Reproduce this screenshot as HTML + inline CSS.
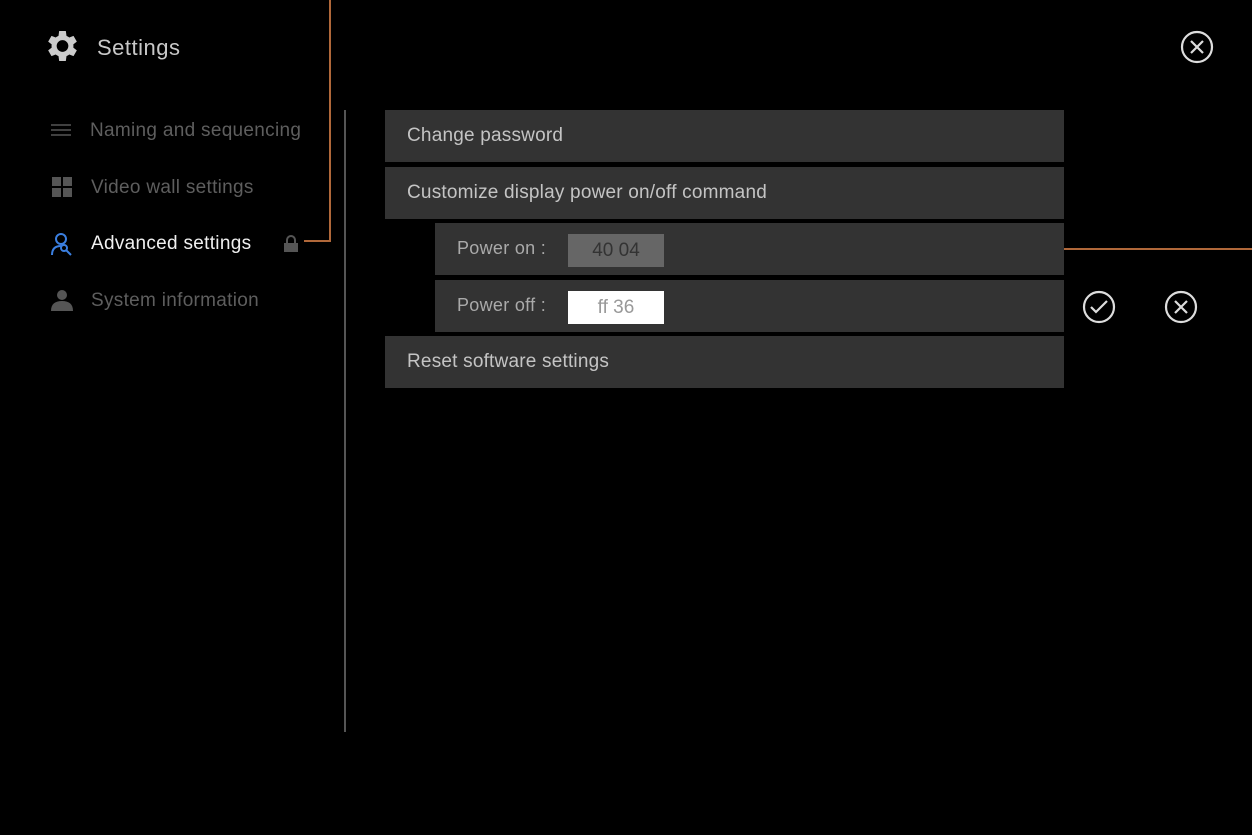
<!DOCTYPE html>
<html><head><meta charset="utf-8"><style>
*{margin:0;padding:0;box-sizing:border-box}
body{width:1252px;height:835px;background:#000;position:relative;overflow:hidden;font-family:"Liberation Sans",sans-serif}
.a{position:absolute}
.t{color:#c8c8c8;font-size:22px}
.nav{font-size:19px;color:#5e5e5e;letter-spacing:0.3px}
.bar{background:#333;color:#c4c4c4;font-size:19px;padding-left:22px;line-height:52px;height:52px;letter-spacing:0.2px}
.sub{background:#333;height:52px;left:435px;width:629px}
.lbl{color:#aaa;font-size:18px;left:22px;top:15px;letter-spacing:0.3px}
.inp{left:133px;top:11px;width:96px;height:33px;font-size:19px;text-align:center;line-height:33px}
</style></head><body>
<svg class="a" style="left:41px;top:26px" width="40" height="40" viewBox="0 0 24 24"><path fill="#ccc" d="M19.4 13a7.5 7.5 0 0 0 0-2l2.1-1.6-2-3.5-2.5 1a7 7 0 0 0-1.7-1L14.9 3h-4l-.4 2.9a7 7 0 0 0-1.7 1l-2.5-1-2 3.5L6.4 11a7.5 7.5 0 0 0 0 2l-2.1 1.6 2 3.5 2.5-1a7 7 0 0 0 1.7 1l.4 2.9h4l.4-2.9a7 7 0 0 0 1.7-1l2.5 1 2-3.5zM12.9 15.5a3.5 3.5 0 1 1 0-7 3.5 3.5 0 0 1 0 7z"/></svg>
<div class="a t" style="left:97px;top:35px;letter-spacing:0.5px">Settings</div>
<div class="a" style="left:329px;top:0;width:2px;height:242px;background:#b0683a"></div>
<div class="a" style="left:304px;top:240px;width:27px;height:2px;background:#b0683a"></div>
<div class="a" style="left:344px;top:110px;width:2px;height:622px;background:#555"></div>
<div class="a" style="left:1064px;top:248px;width:188px;height:2px;background:#b0683a"></div>
<svg class="a" style="left:51px;top:123px" width="20" height="14"><g stroke="#555" stroke-width="1.5"><line x1="0" y1="2" x2="20" y2="2"/><line x1="0" y1="7" x2="20" y2="7"/><line x1="0" y1="12" x2="20" y2="12"/></g></svg>
<div class="a nav" style="left:90px;top:120px">Naming and sequencing</div>
<svg class="a" style="left:52px;top:177px" width="20" height="20" fill="#555"><rect width="9" height="9"/><rect x="11" width="9" height="9"/><rect y="11" width="9" height="9"/><rect x="11" y="11" width="9" height="9"/></svg>
<div class="a nav" style="left:91px;top:177px">Video wall settings</div>
<svg class="a" style="left:49px;top:231px" width="26" height="26" viewBox="0 0 26 26" fill="none" stroke="#3b7fe0" stroke-width="2"><circle cx="12" cy="8" r="5"/><path d="M3 24c0-6 3-9 9-9"/><circle cx="15" cy="17" r="3"/><path d="M17 19l5 5"/></svg>
<div class="a" style="left:91px;top:233px;font-size:19px;color:#f0f0f0;letter-spacing:0.3px">Advanced settings</div>
<svg class="a" style="left:284px;top:235px" width="14" height="17"><path d="M3 8V5a4 4 0 0 1 8 0v3" stroke="#555" stroke-width="2" fill="none"/><rect y="8" width="14" height="9" fill="#555"/></svg>
<svg class="a" style="left:51px;top:289px" width="22" height="22" fill="#555"><circle cx="11" cy="6" r="5"/><path d="M0 22c0-7 4-10 11-10s11 3 11 10z"/></svg>
<div class="a nav" style="left:91px;top:290px">System information</div>
<div class="a bar" style="left:385px;top:110px;width:679px">Change password</div>
<div class="a bar" style="left:385px;top:167px;width:679px">Customize display power on/off command</div>
<div class="a sub" style="top:223px"><div class="a lbl">Power on :</div><div class="a inp" style="background:#666;color:#333">40 04</div></div>
<div class="a sub" style="top:280px"><div class="a lbl">Power off :</div><div class="a inp" style="background:#fff;color:#999">ff 36</div></div>
<div class="a bar" style="left:385px;top:336px;width:679px">Reset software settings</div>
<svg class="a" style="left:1082px;top:290px" width="34" height="34" viewBox="0 0 34 34" fill="none" stroke="#ddd" stroke-width="2.2"><circle cx="17" cy="17" r="15"/><path d="M9 17l5 5 11-11"/></svg>
<svg class="a" style="left:1164px;top:290px" width="34" height="34" viewBox="0 0 34 34" fill="none" stroke="#ddd" stroke-width="2.2"><circle cx="17" cy="17" r="15"/><path d="M11 11l12 12M23 11L11 23"/></svg>
<svg class="a" style="left:1180px;top:30px" width="34" height="34" viewBox="0 0 34 34" fill="none" stroke="#ddd" stroke-width="2.2"><circle cx="17" cy="17" r="15"/><path d="M11 11l12 12M23 11L11 23"/></svg>
</body></html>
